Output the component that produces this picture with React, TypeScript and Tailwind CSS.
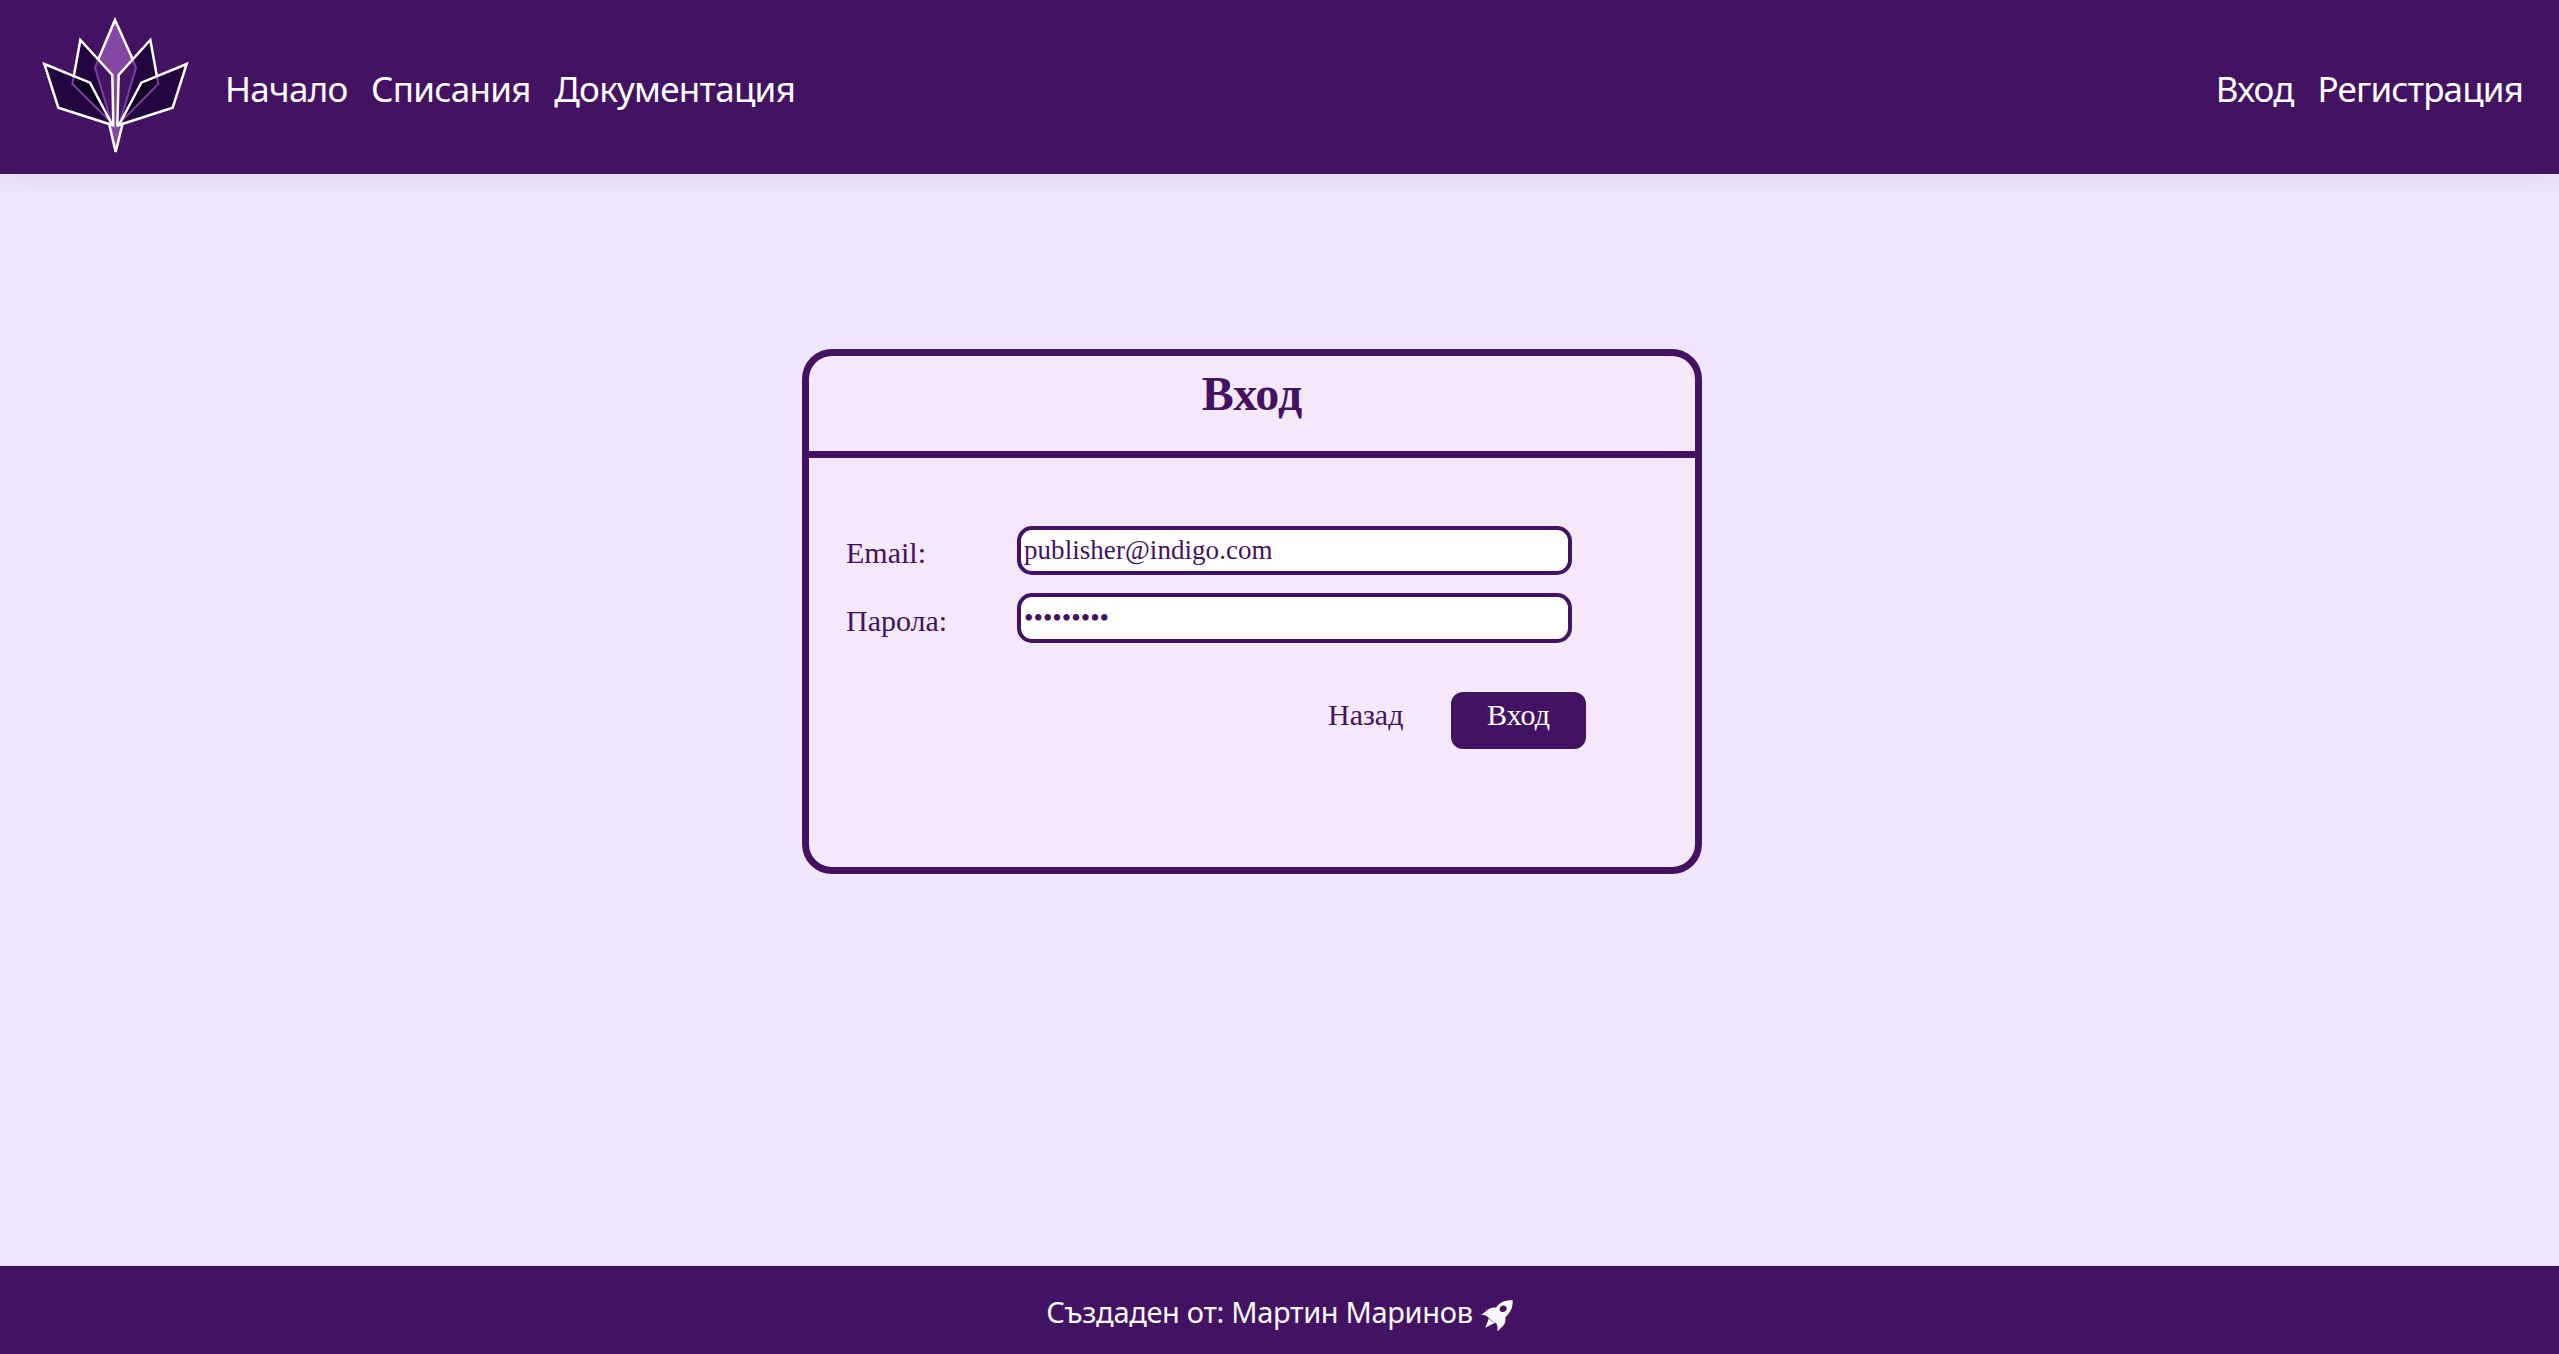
function Logo() {
  return (
    <svg className="h-[174px] w-[170px] shrink-0" viewBox="0 0 510 522" fill="none" strokeLinejoin="miter">
      <polygon points="255,58 318,203 257,378 195,203" fill="#8447a3" />
      <polygon points="150,118 247,225 250,378 127,252" fill="#22043f" />
      <polygon points="361,118 266,225 262,378 385,252" fill="#22043f" />
      <polygon points="203,180 247,225 250,376 244,365 195,203" fill="#451463" />
      <polygon points="310,180 266,225 262,376 269,365 318,203" fill="#451463" />
      <polygon points="44,192 180,248 247,375 85,323" fill="#22043f" />
      <polygon points="470,192 334,248 267,375 428,323" fill="#22043f" />
      <polygon points="132,232 180,248 245,370 127,252" fill="#110026" />
      <polygon points="381,232 334,248 269,370 385,252" fill="#110026" />
      <g stroke="#7e409f" strokeWidth="6">
        <path d="M205 178L195 203L246 372M308 178L318 203L268 372" />
        <path d="M131 230L127 252L246 370M381 230L385 252L268 370" />
      </g>
      <polygon points="238,376 277,376 257,460" fill="#8447a3" />
      <g stroke="#fff" strokeWidth="7.5">
        <path d="M205 178L255 60L308 178" />
        <path d="M131 231L151 120L247 225L250 378" />
        <path d="M381 231L361 120L266 225L262 378" />
        <path d="M247 375L180 248L43 192L85 323Z" />
        <path d="M267 375L334 248L470 192L428 323Z" />
        <path d="M238 374L257 456L277 374" />
      </g>
    </svg>
  );
}

function Rocket() {
  return (
    <svg className="mt-[8px] h-[32px] w-[32px]" viewBox="1384 179 96 96" fill="#f8f9fa">
      <path
        fillRule="evenodd"
        d="M1479 180C1455 179 1441 186 1429 202C1418 200 1409 204 1404 208L1385 224C1392 223 1400 224 1405 231C1408 234 1411 236 1414 239C1418 244 1424 247 1430 249C1434 257 1434 265 1433 273L1448 259C1456 252 1459 243 1457 231C1473 216 1480 202 1479 180ZM1440 208C1439 200 1447 195 1454 196C1461 197 1463 204 1460 209C1455 217 1441 218 1440 208Z"
      />
      <path d="M1408 233L1397 262L1426 247C1417 245 1411 241 1408 233Z" />
    </svg>
  );
}

const field =
  "w-[555px] rounded-[15px] border-4 border-[#441263] bg-white pl-[3px] text-[27px] text-[#441263] outline-none";

export default function App() {
  return (
    <div className="flex h-[1354px] flex-col bg-[#f0e6ff] font-['Noto_Sans',sans-serif]">
      <header className="flex h-[174px] shrink-0 items-center bg-[#441263] pr-[36px] pl-[30px] text-[35px] leading-[48px] text-white shadow-[0_8px_24px_rgba(0,0,0,0.06)]">
        <Logo />
        <nav className="mt-[3px] ml-[25px] flex gap-[23.5px] tracking-[-0.72px]">
          <a>Начало</a>
          <a>Списания</a>
          <a>Документация</a>
        </nav>
        <nav className="mt-[3px] ml-auto flex gap-[24px] tracking-[-0.85px]">
          <a>Вход</a>
          <a>Регистрация</a>
        </nav>
      </header>

      <main className="flex-1 pt-[175px] pl-[802px]">
        <section className="h-[525px] w-[900px] rounded-[30px] border-[7px] border-[#441263] bg-[#f4e8fa] font-['Liberation_Serif',serif] text-[30px] leading-[40px] text-[#441263]">
          <h1 className="h-[102px] border-b-[7px] border-[#441263] pt-[8px] text-center text-[48px] leading-[60px] font-bold">
            Вход
          </h1>
          <form className="pt-[68px] pl-[37px]">
            <div className="flex h-[67px] items-start">
              <label className="w-[171px] pt-[7px]">Email:</label>
              <input className={`${field} h-[49px] tracking-[0.05px]`} type="text" defaultValue="publisher@indigo.com" />
            </div>
            <div className="flex h-[99px] items-start">
              <label className="w-[171px] pt-[8px]">Парола:</label>
              <input className={`${field} h-[50px]`} type="password" defaultValue="publisher" />
            </div>
            <div className="flex items-start pl-[482px]">
              <a className="w-[123px] pt-[3px]">Назад</a>
              <button type="button" className="h-[57px] w-[135px] rounded-[12px] bg-[#441263] pb-[11px] text-white">
                Вход
              </button>
            </div>
          </form>
        </section>
      </main>

      <footer className="flex h-[89px] shrink-0 items-start justify-center gap-[8px] border-t border-[#dfdbe6] bg-[#441263] pt-[26px] text-[29px] leading-[40px] tracking-[-0.33px] text-[#f8f9fa]">
        <span>Създаден от: Мартин Маринов</span>
        <Rocket />
      </footer>
    </div>
  );
}
